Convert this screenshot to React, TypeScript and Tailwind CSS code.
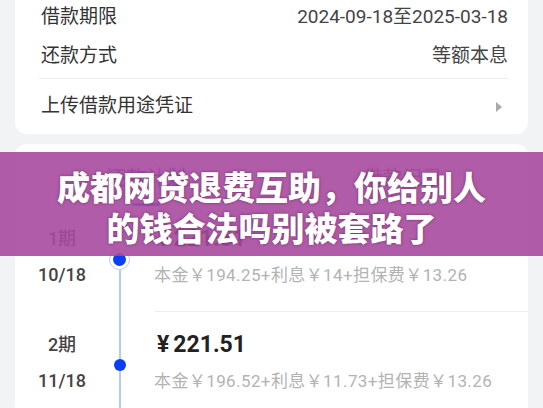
import React from 'react';

const font = { fontFamily: 'Roboto, "Noto Sans CJK SC", sans-serif' };

const plan = [
  { term: '1期', date: '10/18', amount: '221.51', detail: '本金￥194.25+利息￥14+担保费￥13.26', current: true },
  { term: '2期', date: '11/18', amount: '221.51', detail: '本金￥196.52+利息￥11.73+担保费￥13.26', current: false },
];

export default function App() {
  return (
    <div className="relative w-[543px] h-[408px] overflow-hidden bg-[#f2f3f5]" style={font}>
      {/* 借款信息卡片 */}
      <div className="mx-[15px] bg-white rounded-b-xl pl-[24px] pr-[20px]">
        <div className="h-[34px] flex items-center justify-between text-[19px]">
          <span className="pl-[2px] text-[#333]">借款期限</span>
          <span className="text-[#444]">2024-09-18至2025-03-18</span>
        </div>
        <div className="h-[45px] flex items-center justify-between text-[19px] border-b border-[#ededed]">
          <span className="pl-[2px] text-[#333]">还款方式</span>
          <span className="text-[#444]">等额本息</span>
        </div>
        <div className="h-[55px] flex items-center justify-between text-[19px]">
          <span className="pl-[2px] text-[#333]">上传借款用途凭证</span>
          <span className="w-0 h-0 mr-[6px] border-y-[5px] border-y-transparent border-l-[6px] border-l-[#aaa]" />
        </div>
      </div>

      {/* 还款计划卡片 */}
      <div className="mx-[15px] mt-[10px] bg-white rounded-xl">
        <div className="h-[62px] flex text-[20px] text-[#333]">
          <div className="w-[262px] flex flex-col items-center justify-end">
            <span className="mb-[10px] text-[#2152f5]">还款计划</span>
            <span className="w-[28px] h-[3px] rounded-full bg-[#2152f5]" />
          </div>
          <div className="flex-1 flex flex-col items-center justify-end pb-[13px]">
            <span className="text-[#666]">借款记录</span>
          </div>
        </div>

        {plan.map((row, i) => (
          <div key={i} className="flex">
            <div className="w-[94px] flex flex-col items-center pt-[15px] pb-[18px] text-[#444] font-medium">
              <span className="h-[36px] leading-[36px] text-[18px]">{row.term}</span>
              <span className="h-[36px] leading-[36px] text-[18px]">{row.date}</span>
            </div>
            <div className="w-[21px] flex flex-col items-center">
              <div className={`flex-1 w-[2px] ${i === 0 ? 'bg-transparent' : 'bg-[#b3cbf5]'}`} />
              {row.current ? (
                <div className="w-[21px] h-[21px] rounded-full border-[1.5px] border-[#b9c9ef] flex items-center justify-center">
                  <div className="w-[13px] h-[13px] rounded-full bg-[#0a3ef5]" />
                </div>
              ) : (
                <div className="w-[12px] h-[12px] rounded-full bg-[#0a3ef5]" />
              )}
              <div className="flex-1 w-[2px] bg-[#b3cbf5]" />
            </div>
            <div className="flex-1 ml-[24px] pt-[15px] pb-[18px] border-b border-[#ededed]">
              <div className="h-[36px] leading-[36px] pl-[3px] text-[23px] font-bold text-[#222]">
                <span className="mr-[4px]">¥</span>{row.amount}
              </div>
              <div className="h-[36px] leading-[36px] text-[17px] tracking-[0.4px] text-[#b3b3b3]">{row.detail}</div>
            </div>
          </div>
        ))}
      </div>

      {/* 标题横幅 */}
      <div className="absolute left-0 top-[152px] w-full h-[104px] bg-[#a74a9e]/90 flex flex-col items-center pt-[14px] text-white text-[33px] leading-[41px] font-black [text-shadow:0_0_3px_rgba(60,0,60,0.55)]" style={{ fontFamily: '"Noto Sans CJK SC", sans-serif' }}>
        <span>成都网贷退费互助，你给别人</span>
        <span>的钱合法吗别被套路了</span>
      </div>
    </div>
  );
}
